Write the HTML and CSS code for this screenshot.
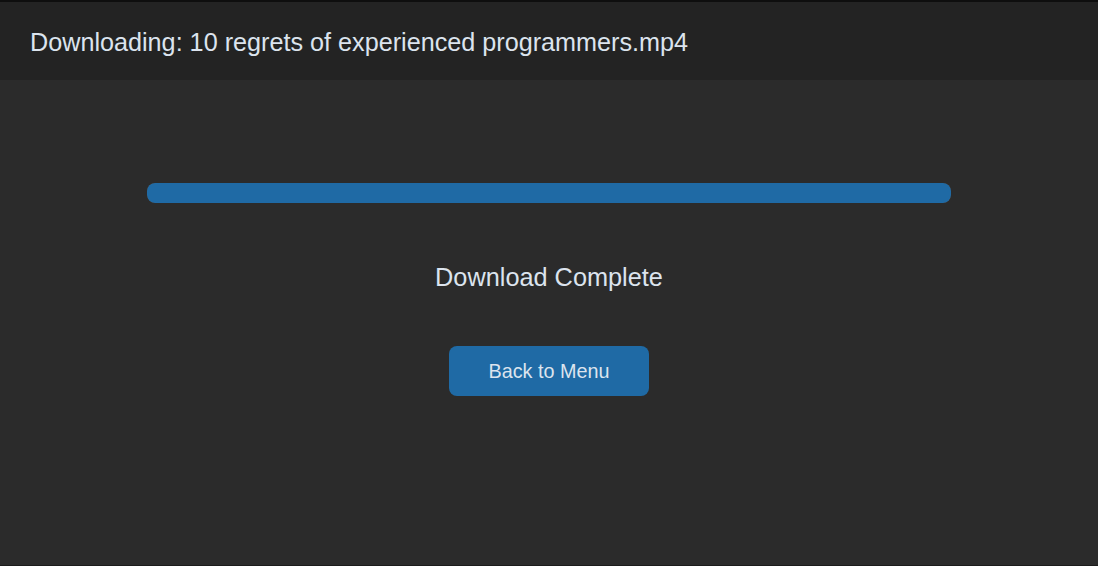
FILE: index.html
```html
<!DOCTYPE html>
<html>
<head>
<meta charset="utf-8">
<link rel="stylesheet" href="styles.css">
</head>
<body>
<div class="app">
  <header class="topbar">
    <div class="title">Downloading: 10 regrets of experienced programmers.mp4</div>
  </header>
  <main class="content">
    <div class="progress"><div class="progress-fill" style="width:100%"></div></div>
    <div class="status">Download Complete</div>
    <button class="btn">Back to Menu</button>
  </main>
</div>
</body>
</html>
```
FILE: styles.css
```css
html, body {
  margin: 0;
  padding: 0;
  background: #2b2b2b;
}
.app {
  width: 1098px;
  height: 566px;
  box-sizing: border-box;
  display: flex;
  flex-direction: column;
  border-top: 2px solid #0e0e0e;
  border-bottom: 1px solid #1c1c1c;
  font-family: "Liberation Sans", Arial, sans-serif;
  color: #dce4ee;
}
.topbar {
  height: 78px;
  background: #232323;
  display: flex;
  align-items: center;
  padding-left: 30px;
}
.title {
  font-size: 25.2px;
  line-height: 30px;
  margin-top: 2px;
}
.content {
  flex: 1;
  display: flex;
  flex-direction: column;
  align-items: center;
  padding-top: 103px;
}
.progress {
  width: 804px;
  height: 20px;
  border-radius: 8px;
  background: #4a4d50;
  overflow: hidden;
}
.progress-fill {
  height: 100%;
  background: #1f6aa5;
  border-radius: 8px;
}
.status {
  font-size: 25.3px;
  margin-top: 60px;
  line-height: 28px;
}
.btn {
  margin-top: 55px;
  width: 200px;
  height: 50px;
  border: none;
  border-radius: 8px;
  background: #1f6aa5;
  color: #dce4ee;
  font-family: "Liberation Sans", Arial, sans-serif;
  font-size: 19.8px;
  cursor: pointer;
  padding: 0;
}
```
